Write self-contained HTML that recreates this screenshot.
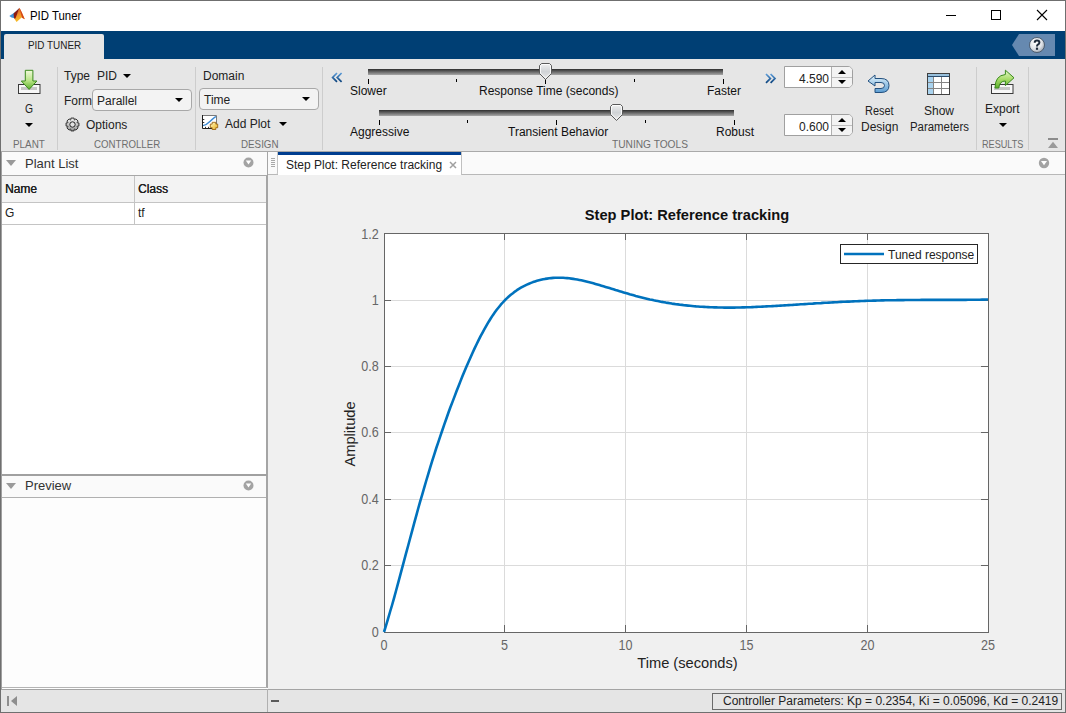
<!DOCTYPE html>
<html><head><meta charset="utf-8">
<style>
*{box-sizing:border-box;}
html,body{margin:0;padding:0;}
body{width:1066px;height:713px;overflow:hidden;position:relative;background:#fff;font-family:"Liberation Sans",sans-serif;color:#000;}
.a{position:absolute;}
.t{position:absolute;white-space:nowrap;line-height:1;}
.sep{position:absolute;width:1px;background:#cdcdcd;top:67px;height:83px;}
.lab{position:absolute;white-space:nowrap;line-height:1;font-size:11px;color:#6e6e6e;}
.tri{position:absolute;width:0;height:0;border-left:4px solid transparent;border-right:4px solid transparent;border-top:4px solid #000;}
</style></head>
<body>
<!-- title bar -->
<div class="a" style="left:0;top:0;width:1066px;height:31px;background:#fff;"></div>
<svg class="a" style="left:0;top:0" width="30" height="26" viewBox="0 0 30 26">
  <defs><linearGradient id="lg" x1="0" y1="0" x2="0.3" y2="1"><stop offset="0" stop-color="#c8461c"/><stop offset="0.5" stop-color="#f08a2a"/><stop offset="1" stop-color="#f8c52a"/></linearGradient></defs>
  <path d="M9.3,15.9 L13.5,13.2 L16.5,11 L19.2,8.2 L16.5,14 L14.5,18.2 L11.5,17.6 Z" fill="#3d8fd6"/>
  <path d="M19.4,7.8 L21.6,12 L24.8,19.2 L21.6,17.6 L16.6,22 L14.2,18.4 L16.8,14.2 Z" fill="url(#lg)"/>
  <path d="M19.4,7.8 L21.6,12 L24.8,19.2 L22,17.8 Z" fill="#d4451a"/>
  <path d="M13.6,13.4 L19.2,8.2 L17.4,13.6 L15.4,18.6 L14.2,18.4 L13.8,16 Z" fill="#8e1a10"/>
</svg>
<div class="t" style="left:30px;top:10px;font-size:12px;color:#000;transform:scaleX(.95);transform-origin:0 0;">PID Tuner</div>
<div class="a" style="left:946px;top:15px;width:10px;height:1px;background:#000;"></div>
<div class="a" style="left:991px;top:10px;width:10px;height:10px;border:1px solid #000;"></div>
<svg class="a" style="left:1036px;top:9px" width="12" height="12" viewBox="0 0 12 12"><path d="M1,1 L11,11 M11,1 L1,11" stroke="#000" stroke-width="1.1"/></svg>

<!-- blue bar -->
<div class="a" style="left:0;top:31px;width:1066px;height:28px;background:#003f74;"></div>
<div class="a" style="left:4px;top:34px;width:100px;height:25px;background:#e6e6e6;border-radius:2px 2px 0 0;"></div>
<div class="t" style="left:27.5px;top:40px;font-size:11.5px;color:#222;transform:scaleX(.86);transform-origin:0 0;">PID TUNER</div>
<svg class="a" style="left:1011px;top:34px" width="45" height="22" viewBox="0 0 45 22">
  <path d="M1,11 L8,0 L44,0 L44,22 L8,22 Z" fill="#6689b0"/>
  <defs><radialGradient id="hq" cx="0.4" cy="0.35" r="0.7"><stop offset="0" stop-color="#ffffff"/><stop offset="0.6" stop-color="#dfe3e8"/><stop offset="1" stop-color="#9aa3ad"/></radialGradient></defs>
  <circle cx="26" cy="11" r="7.5" fill="url(#hq)" stroke="#3c4a5a" stroke-width="0.8"/>
  <path d="M23.7,8.7 Q23.7,6.4 26,6.4 Q28.4,6.4 28.4,8.5 Q28.4,9.9 26.9,10.7 Q26,11.2 26,12.6" stroke="#1f2b3b" stroke-width="2" fill="none"/><rect x="24.9" y="13.6" width="2.2" height="2.2" fill="#1f2b3b"/>
</svg>

<!-- ribbon -->
<div class="a" style="left:0;top:59px;width:1066px;height:93px;background:#e6e6e6;border-bottom:1px solid #a9a9a9;"></div>
<div class="sep" style="left:57px"></div>
<div class="sep" style="left:195px"></div>
<div class="sep" style="left:322px"></div>
<div class="sep" style="left:976px"></div>
<div class="sep" style="left:1028px"></div>

<!-- PLANT -->
<svg class="a" style="left:12px;top:65px" width="35" height="35" viewBox="0 0 35 35">
  <defs><linearGradient id="ga" x1="0" y1="0" x2="0" y2="1"><stop offset="0" stop-color="#f2f9dc"/><stop offset="0.55" stop-color="#b8e484"/><stop offset="1" stop-color="#5aae2c"/></linearGradient></defs>
  <rect x="6.5" y="19.5" width="21.5" height="9" fill="#f7f7f7" stroke="#3a3a3a" stroke-width="1"/>
  <rect x="9" y="22" width="16" height="3" fill="#c6c6c6"/>
  <path d="M13.3,5.3 L20.9,5.3 L20.9,16 L24.9,16 L17.1,24.4 L9.3,16 L13.3,16 Z" fill="url(#ga)" stroke="#3a8a1c" stroke-width="1"/>
</svg>
<div class="t" style="left:25px;top:103px;font-size:12px;color:#222;transform:scaleX(.86);transform-origin:0 0;">G</div>
<div class="tri" style="left:25px;top:123px;"></div>
<div class="lab" style="left:13px;top:139px;transform:scaleX(.9);transform-origin:0 0;">PLANT</div>

<!-- CONTROLLER -->
<div class="t" style="left:64px;top:70px;font-size:12px;color:#222;">Type</div>
<div class="t" style="left:97px;top:70px;font-size:12px;color:#222;">PID</div>
<div class="tri" style="left:123px;top:74px;"></div>
<div class="t" style="left:64px;top:95px;font-size:12px;color:#222;">Form</div>
<div class="a" style="left:92px;top:89px;width:100px;height:22px;background:#f3f3f3;border:1px solid #a8a8a8;border-radius:4px;"></div>
<div class="t" style="left:97px;top:95px;font-size:12px;color:#222;">Parallel</div>
<div class="tri" style="left:175px;top:98px;"></div>
<svg class="a" style="left:64.5px;top:116.5px" width="15" height="15" viewBox="0 0 15 15">
  <defs><linearGradient id="gg" x1="0" y1="0" x2="0" y2="1"><stop offset="0" stop-color="#f4f4f4"/><stop offset="1" stop-color="#9a9a9a"/></linearGradient></defs>
  <path d="M12.18,5.74 L13.91,5.93 L13.91,9.07 L12.18,9.26 L12.05,9.56 L13.14,10.92 L10.92,13.14 L9.56,12.05 L9.26,12.18 L9.07,13.91 L5.93,13.91 L5.74,12.18 L5.44,12.05 L4.08,13.14 L1.86,10.92 L2.95,9.56 L2.82,9.26 L1.09,9.07 L1.09,5.93 L2.82,5.74 L2.95,5.44 L1.86,4.08 L4.08,1.86 L5.44,2.95 L5.74,2.82 L5.93,1.09 L9.07,1.09 L9.26,2.82 L9.56,2.95 L10.92,1.86 L13.14,4.08 L12.05,5.44 Z" fill="url(#gg)" stroke="#2e2e2e" stroke-width="1"/>
  <circle cx="7.5" cy="7.5" r="2.7" fill="#e2e2e2" stroke="#262626" stroke-width="1"/>
</svg>
<div class="t" style="left:86px;top:119px;font-size:12px;color:#222;">Options</div>
<div class="lab" style="left:94px;top:139px;transform:scaleX(.88);transform-origin:0 0;">CONTROLLER</div>

<!-- DESIGN -->
<div class="t" style="left:203px;top:70px;font-size:12px;color:#222;">Domain</div>
<div class="a" style="left:199px;top:88px;width:120px;height:22px;background:#f3f3f3;border:1px solid #a8a8a8;border-radius:4px;"></div>
<div class="t" style="left:204px;top:94px;font-size:12px;color:#222;">Time</div>
<div class="tri" style="left:302px;top:97px;"></div>
<svg class="a" style="left:198px;top:110px" width="24" height="24" viewBox="0 0 24 24">
  <defs><linearGradient id="pl" x1="0" y1="0" x2="1" y2="1"><stop offset="0" stop-color="#fffbe0"/><stop offset="0.5" stop-color="#f6d66a"/><stop offset="1" stop-color="#e2a82a"/></linearGradient></defs>
  <rect x="5" y="5.5" width="13.5" height="13" fill="#fff"/>
  <path d="M4.5,5.5 H18.5 V15" stroke="#7a7a7a" stroke-width="1" fill="none"/>
  <path d="M4.5,5 V18.5 H14" stroke="#1e1e1e" stroke-width="1" fill="none"/>
  <path d="M5,9.5 H6.3 M5,12.5 H6.3 M7.5,18 V16.8 M10.5,18 V16.8" stroke="#333" stroke-width="1"/>
  <path d="M5,15.6 C8.5,15 10.5,13 12.5,11 C14.5,9 16.5,7.2 18,6.6" stroke="#3a88d2" stroke-width="1.4" fill="none"/>
  <path d="M14.2,12.3 H17.8 V14.1 H19.7 V17.7 H17.8 V19.5 H14.2 V17.7 H12.3 V14.1 H14.2 Z" fill="url(#pl)" stroke="#9c6410" stroke-width="0.9"/>
</svg>
<div class="t" style="left:225px;top:118px;font-size:12px;color:#222;">Add Plot</div>
<div class="tri" style="left:279px;top:122px;"></div>
<div class="lab" style="left:240.5px;top:139px;transform:scaleX(.89);transform-origin:0 0;">DESIGN</div>

<!-- TUNING TOOLS -->
<svg class="a" style="left:331px;top:72px" width="13" height="11" viewBox="0 0 13 11"><defs><linearGradient id="cv" x1="0" y1="0" x2="0" y2="1"><stop offset="0" stop-color="#5b9bd8"/><stop offset="1" stop-color="#0d447e"/></linearGradient></defs><path d="M6,1 L1.6,5.4 L6,9.8 M10.6,1 L6.2,5.4 L10.6,9.8" stroke="url(#cv)" stroke-width="1.7" fill="none"/></svg>
<svg class="a" style="left:764px;top:73px" width="13" height="11" viewBox="0 0 13 11"><path d="M2,1 L6.4,5.4 L2,9.8 M6.6,1 L11,5.4 L6.6,9.8" stroke="url(#cv)" stroke-width="1.7" fill="none"/></svg>
<!-- slider 1 -->
<div class="a" style="left:368px;top:69px;width:355px;height:6px;background:linear-gradient(#2e2e2e,#a8a8a8);"></div>
<div class="a" style="left:368px;top:79px;width:1px;height:5px;background:#000;"></div>
<div class="a" style="left:456px;top:79px;width:1px;height:3px;background:#000;"></div>
<div class="a" style="left:545px;top:79px;width:1px;height:5px;background:#000;"></div>
<div class="a" style="left:634px;top:79px;width:1px;height:3px;background:#000;"></div>
<div class="a" style="left:723px;top:79px;width:1px;height:5px;background:#000;"></div>
<svg class="a" style="left:539px;top:63px" width="13" height="18" viewBox="0 0 13 18">
  <defs><linearGradient id="th" x1="0" y1="0" x2="0" y2="1"><stop offset="0" stop-color="#f2f2f2"/><stop offset="0.5" stop-color="#d0d3d6"/><stop offset="1" stop-color="#e8e8e8"/></linearGradient></defs>
  <path d="M0.5,2.5 L2.5,0.5 L10.5,0.5 L12.5,2.5 L12.5,10.5 L6.5,16.5 L0.5,10.5 Z" fill="url(#th)" stroke="#5a5a5a" stroke-width="1"/><path d="M1.5,2.9 L2.9,1.5 L10.1,1.5 L11.5,2.9 L11.5,10.1 L6.5,15.1 L1.5,10.1 Z" fill="none" stroke="#fff" stroke-width="0.9" opacity="0.9"/>
</svg>
<div class="t" style="left:350px;top:85px;font-size:12px;color:#111;">Slower</div>
<div class="t" style="left:479px;top:85px;font-size:12px;color:#111;">Response Time (seconds)</div>
<div class="t" style="left:707px;top:85px;font-size:12px;color:#111;">Faster</div>
<!-- slider 2 -->
<div class="a" style="left:379px;top:110px;width:355px;height:6px;background:linear-gradient(#2e2e2e,#a8a8a8);"></div>
<div class="a" style="left:379px;top:120px;width:1px;height:5px;background:#000;"></div>
<div class="a" style="left:467px;top:120px;width:1px;height:3px;background:#000;"></div>
<div class="a" style="left:556px;top:120px;width:1px;height:5px;background:#000;"></div>
<div class="a" style="left:645px;top:120px;width:1px;height:3px;background:#000;"></div>
<div class="a" style="left:734px;top:120px;width:1px;height:5px;background:#000;"></div>
<svg class="a" style="left:610px;top:104px" width="13" height="18" viewBox="0 0 13 18">
  <path d="M0.5,2.5 L2.5,0.5 L10.5,0.5 L12.5,2.5 L12.5,10.5 L6.5,16.5 L0.5,10.5 Z" fill="url(#th)" stroke="#5a5a5a" stroke-width="1"/><path d="M1.5,2.9 L2.9,1.5 L10.1,1.5 L11.5,2.9 L11.5,10.1 L6.5,15.1 L1.5,10.1 Z" fill="none" stroke="#fff" stroke-width="0.9" opacity="0.9"/>
</svg>
<div class="t" style="left:350px;top:126px;font-size:12px;color:#111;">Aggressive</div>
<div class="t" style="left:508px;top:126px;font-size:12px;color:#111;">Transient Behavior</div>
<div class="t" style="left:716px;top:126px;font-size:12px;color:#111;">Robust</div>
<!-- spinners -->
<div class="a" style="left:784px;top:66px;width:69px;height:22px;background:#fff;border:1px solid #a0a0a0;border-radius:0 5px 5px 0;"></div>
<div class="a" style="left:831px;top:67px;width:21px;height:20px;background:#f3f3f3;border-left:1px solid #b0b0b0;border-radius:0 4px 4px 0;"></div>
<div class="a" style="left:832px;top:77px;width:20px;height:1px;background:#c0c0c0;"></div>
<div class="a" style="left:838px;top:70px;width:0;height:0;border-left:4px solid transparent;border-right:4px solid transparent;border-bottom:4px solid #000;"></div>
<div class="a" style="left:838px;top:80px;width:0;height:0;border-left:4px solid transparent;border-right:4px solid transparent;border-top:4px solid #000;"></div>
<div class="t" style="left:790px;top:73px;width:39px;text-align:right;font-size:12px;color:#222;">4.590</div>
<div class="a" style="left:784px;top:114px;width:69px;height:22px;background:#fff;border:1px solid #a0a0a0;border-radius:0 5px 5px 0;"></div>
<div class="a" style="left:831px;top:115px;width:21px;height:20px;background:#f3f3f3;border-left:1px solid #b0b0b0;border-radius:0 4px 4px 0;"></div>
<div class="a" style="left:832px;top:125px;width:20px;height:1px;background:#c0c0c0;"></div>
<div class="a" style="left:838px;top:118px;width:0;height:0;border-left:4px solid transparent;border-right:4px solid transparent;border-bottom:4px solid #000;"></div>
<div class="a" style="left:838px;top:128px;width:0;height:0;border-left:4px solid transparent;border-right:4px solid transparent;border-top:4px solid #000;"></div>
<div class="t" style="left:790px;top:121px;width:39px;text-align:right;font-size:12px;color:#222;">0.600</div>
<div class="lab" style="left:612px;top:139px;transform:scaleX(.925);transform-origin:0 0;">TUNING TOOLS</div>

<!-- Reset / Show -->
<svg class="a" style="left:867px;top:74px" width="24" height="20" viewBox="0 0 24 20">
  <defs><linearGradient id="rb" x1="0" y1="0" x2="0" y2="1"><stop offset="0" stop-color="#e6f6fd"/><stop offset="1" stop-color="#5a9cd2"/></linearGradient></defs>
  <path d="M1,7 L8,1 L8,4.5 L14,4.5 Q22,4.5 22,11.5 Q22,18.5 14,18.5 L8,18.5 L8,14.5 L14,14.5 Q17.5,14.5 17.5,11.5 Q17.5,8.5 14,8.5 L8,8.5 L8,12 Z" fill="url(#rb)" stroke="#22507f" stroke-width="1"/>
</svg>
<div class="t" style="left:865px;top:105px;font-size:12px;color:#222;transform:scaleX(.91);transform-origin:0 0;">Reset</div>
<div class="t" style="left:861px;top:121px;font-size:12px;color:#222;">Design</div>
<svg class="a" style="left:927px;top:73px" width="23" height="22" viewBox="0 0 23 22">
  <rect x="0.5" y="0.5" width="22" height="21" fill="#fff" stroke="#404040" stroke-width="1"/>
  <rect x="1" y="1" width="21" height="3" fill="#98c0dc"/>
  <path d="M1,3.5 H22" stroke="#2d4d6d" stroke-width="1"/>
  <rect x="1" y="4" width="5" height="17" fill="#a9d3ef"/>
  <path d="M1,9.5 H22 M1,15.5 H22 M6.5,4 V21 M14.5,4 V21" stroke="#858585" stroke-width="1"/>
</svg>
<div class="t" style="left:924px;top:105px;font-size:12px;color:#222;">Show</div>
<div class="t" style="left:910px;top:121px;font-size:12px;color:#222;transform:scaleX(.95);transform-origin:0 0;">Parameters</div>

<!-- RESULTS -->
<svg class="a" style="left:985px;top:65px" width="35" height="35" viewBox="0 0 35 35">
  <defs><linearGradient id="eg" x1="0" y1="0" x2="0" y2="1"><stop offset="0" stop-color="#e6f8c8"/><stop offset="0.5" stop-color="#a8dc6a"/><stop offset="1" stop-color="#5cae2a"/></linearGradient></defs>
  <rect x="6.5" y="19.5" width="21.5" height="9" fill="#f7f7f7" stroke="#3a3a3a" stroke-width="1"/>
  <rect x="9" y="22" width="16" height="3" fill="#c6c6c6"/>
  <path d="M10,23 Q10,10.5 20.4,9.5 L20.4,5.2 L29,12.8 L20.4,20.6 L20.4,16 Q14.5,16 13.8,23 Z" fill="url(#eg)" stroke="#3a8a1c" stroke-width="1"/>
</svg>
<div class="t" style="left:985px;top:103px;font-size:12px;color:#222;">Export</div>
<div class="tri" style="left:999px;top:123px;"></div>
<div class="lab" style="left:981.8px;top:139px;transform:scaleX(.83);transform-origin:0 0;">RESULTS</div>
<svg class="a" style="left:1048px;top:138px" width="10" height="10" viewBox="0 0 10 10"><rect x="0" y="0" width="10" height="2" fill="#8c8c8c"/><path d="M0,10 L5,3.8 L10,10 Z" fill="#9a9a9a"/></svg>

<!-- LEFT PANEL -->
<div class="a" style="left:1px;top:152px;width:267px;height:536px;background:#fff;border-right:1px solid #a5a5a5;"></div>
<div class="a" style="left:266px;top:175px;width:1px;height:513px;background:#a5a5a5;"></div>
<div class="a" style="left:1px;top:152px;width:266px;height:24px;background:#fafafa;border-bottom:1px solid #a8a8a8;"></div>
<div class="a" style="left:6px;top:160px;width:0;height:0;border-left:5px solid transparent;border-right:5px solid transparent;border-top:6px solid #9a9a9a;"></div>
<div class="t" style="left:25px;top:157px;font-size:13px;color:#333;">Plant List</div>
<svg class="a" style="left:243px;top:157px" width="11" height="11" viewBox="0 0 11 11"><circle cx="5.5" cy="5.5" r="5" fill="#a3a3a3"/><path d="M2.8,3.6 L8.2,3.6 L5.5,7.6 Z" fill="#fff"/></svg>
<!-- table -->
<div class="a" style="left:1px;top:176px;width:265px;height:27px;background:#f3f3f3;border-bottom:1px solid #c4c4c4;"></div>
<div class="a" style="left:1px;top:203px;width:265px;height:22px;background:#fff;border-bottom:1px solid #c4c4c4;"></div>
<div class="a" style="left:134px;top:176px;width:1px;height:48px;background:#c4c4c4;"></div>
<div class="t" style="left:5px;top:183px;font-size:12px;color:#222;text-shadow:0.15px 0 0 #111;">Name</div>
<div class="t" style="left:138px;top:183px;font-size:12px;color:#222;text-shadow:0.15px 0 0 #111;">Class</div>
<div class="t" style="left:5px;top:207px;font-size:12px;color:#222;">G</div>
<div class="t" style="left:138px;top:207px;font-size:12px;color:#222;">tf</div>
<!-- preview -->
<div class="a" style="left:1px;top:474px;width:266px;height:2px;background:#a0a0a0;"></div>
<div class="a" style="left:1px;top:476px;width:265px;height:22px;background:#fafafa;border-bottom:1px solid #b0b0b0;"></div>
<div class="a" style="left:6px;top:483px;width:0;height:0;border-left:5px solid transparent;border-right:5px solid transparent;border-top:6px solid #9a9a9a;"></div>
<div class="t" style="left:25px;top:479px;font-size:13px;color:#333;">Preview</div>
<svg class="a" style="left:243px;top:480px" width="11" height="11" viewBox="0 0 11 11"><circle cx="5.5" cy="5.5" r="5" fill="#a3a3a3"/><path d="M2.8,3.6 L8.2,3.6 L5.5,7.6 Z" fill="#fff"/></svg>
<div class="a" style="left:1px;top:498px;width:265px;height:189px;background:#fdfdfd;"></div>
<div class="a" style="left:1px;top:687px;width:266px;height:1px;background:#b4b4b4;"></div>
<div class="a" style="left:1px;top:689px;width:1064px;height:1px;background:#a4a4a4;"></div>
<div class="a" style="left:1px;top:690px;width:1064px;height:22px;background:#e5e5e5;"></div>
<div class="a" style="left:267px;top:689px;width:1px;height:23px;background:#b0b0b0;"></div>
<svg class="a" style="left:6px;top:695px" width="12" height="12" viewBox="0 0 12 12"><rect x="1" y="1" width="2" height="10" fill="#8e8e8e"/><path d="M5,6 L11,1 L11,11 Z" fill="#8e8e8e"/></svg>
<div class="a" style="left:271px;top:700px;width:8px;height:2px;background:#5a5a5a;"></div>

<div class="a" style="left:1px;top:152px;width:1px;height:537px;background:#a0a0a0;"></div>
<!-- DOC AREA -->
<div class="a" style="left:268px;top:152px;width:797px;height:537px;background:#f0f0f0;"></div>
<div class="a" style="left:268px;top:152px;width:797px;height:23px;background:#fafafa;border-bottom:1px solid #b8b8b8;"></div>
<div class="a" style="left:268px;top:152px;width:10px;height:23px;background:#fafafa;border-right:1px solid #c4c4c4;border-bottom:1px solid #b8b8b8;border-bottom-right-radius:2px;"></div>
<svg class="a" style="left:271px;top:158px" width="5" height="10" viewBox="0 0 5 10"><path d="M0,0.5 H4 M0,2.5 H4 M0,4.5 H4 M0,6.5 H4 M0,8.5 H4" stroke="#a8a8a8" stroke-width="1"/></svg>
<div class="a" style="left:278px;top:152px;width:184px;height:23px;background:#fff;border-right:1px solid #c0c0c0;"></div>
<div class="a" style="left:278px;top:152px;width:183px;height:3px;background:#003e90;"></div>
<div class="t" style="left:286px;top:159px;font-size:12px;color:#222;">Step Plot: Reference tracking</div>
<svg class="a" style="left:449px;top:161px" width="8" height="8" viewBox="0 0 8 8"><path d="M1,1 L7,7 M7,1 L1,7" stroke="#a0a0a0" stroke-width="1.5"/></svg>
<svg class="a" style="left:1038px;top:157px" width="12" height="12" viewBox="0 0 12 12"><circle cx="6" cy="6" r="5.2" fill="#a3a3a3"/><path d="M3,4 L9,4 L6,8.3 Z" fill="#fff"/></svg>

<!-- PLOT -->
<svg class="a" style="left:0;top:0" width="1066" height="713" viewBox="0 0 1066 713">
  <rect x="384" y="233" width="604" height="399" fill="#fff"/>
  <g stroke="#dbdbdb" stroke-width="1">
    <path d="M504.5,233 V632 M625.5,233 V632 M746.5,233 V632 M867.5,233 V632"/>
    <path d="M384,300.5 H988 M384,366.5 H988 M384,432.5 H988 M384,499.5 H988 M384,565.5 H988"/>
  </g>
  <g stroke="#666" stroke-width="1" fill="none">
    <rect x="384.5" y="233.5" width="604" height="399"/>
    <path d="M384,300.5 h7 M384,366.5 h7 M384,432.5 h7 M384,499.5 h7 M384,565.5 h7"/>
    <path d="M988,300.5 h-7 M988,366.5 h-7 M988,432.5 h-7 M988,499.5 h-7 M988,565.5 h-7"/>
    <path d="M504.5,632 v-7 M625.5,632 v-7 M746.5,632 v-7 M867.5,632 v-7"/>
    <path d="M504.5,233 v7 M625.5,233 v7 M746.5,233 v7 M867.5,233 v7"/>
  </g>
  <path d="M384.0,632.0 L386.0,625.6 L388.0,618.9 L390.0,612.0 L392.1,605.0 L394.1,597.8 L396.1,590.5 L398.1,583.1 L400.1,575.6 L402.1,568.1 L404.1,560.6 L406.1,553.1 L408.2,545.5 L410.2,538.0 L412.2,530.6 L414.2,523.1 L416.2,515.8 L418.2,508.5 L420.2,501.4 L422.3,494.3 L424.3,487.3 L426.3,480.5 L428.3,473.8 L430.3,467.1 L432.3,460.6 L434.3,454.3 L436.3,448.0 L438.4,441.9 L440.4,435.9 L442.4,430.0 L444.4,424.2 L446.4,418.5 L448.4,412.8 L450.4,407.3 L452.5,401.9 L454.5,396.6 L456.5,391.3 L458.5,386.2 L460.5,381.1 L462.5,376.1 L464.5,371.2 L466.5,366.5 L468.6,361.8 L470.6,357.2 L472.6,352.7 L474.6,348.4 L476.6,344.2 L478.6,340.1 L480.6,336.1 L482.7,332.3 L484.7,328.6 L486.7,325.1 L488.7,321.7 L490.7,318.5 L492.7,315.4 L494.7,312.5 L496.7,309.8 L498.8,307.2 L500.8,304.7 L502.8,302.5 L504.8,300.3 L506.8,298.4 L508.8,296.5 L510.8,294.8 L512.9,293.2 L514.9,291.6 L516.9,290.2 L518.9,288.9 L520.9,287.7 L522.9,286.6 L524.9,285.6 L526.9,284.6 L529.0,283.7 L531.0,282.9 L533.0,282.1 L535.0,281.4 L537.0,280.8 L539.0,280.3 L541.0,279.8 L543.1,279.3 L545.1,278.9 L547.1,278.6 L549.1,278.3 L551.1,278.1 L553.1,277.9 L555.1,277.8 L557.1,277.8 L559.2,277.7 L561.2,277.8 L563.2,277.8 L565.2,278.0 L567.2,278.1 L569.2,278.3 L571.2,278.6 L573.3,278.9 L575.3,279.2 L577.3,279.5 L579.3,279.9 L581.3,280.3 L583.3,280.8 L585.3,281.3 L587.3,281.8 L589.4,282.3 L591.4,282.8 L593.4,283.3 L595.4,283.9 L597.4,284.5 L599.4,285.1 L601.4,285.7 L603.5,286.3 L605.5,286.9 L607.5,287.5 L609.5,288.1 L611.5,288.7 L613.5,289.3 L615.5,290.0 L617.5,290.6 L619.6,291.2 L621.6,291.8 L623.6,292.4 L625.6,293.0 L627.6,293.6 L629.6,294.2 L631.6,294.7 L633.7,295.3 L635.7,295.9 L637.7,296.4 L639.7,296.9 L641.7,297.4 L643.7,297.9 L645.7,298.4 L647.7,298.9 L649.8,299.4 L651.8,299.8 L653.8,300.3 L655.8,300.7 L657.8,301.1 L659.8,301.5 L661.8,301.9 L663.9,302.2 L665.9,302.6 L667.9,302.9 L669.9,303.2 L671.9,303.6 L673.9,303.9 L675.9,304.2 L677.9,304.4 L680.0,304.7 L682.0,304.9 L684.0,305.2 L686.0,305.4 L688.0,305.6 L690.0,305.8 L692.0,306.0 L694.1,306.2 L696.1,306.4 L698.1,306.5 L700.1,306.7 L702.1,306.8 L704.1,306.9 L706.1,307.0 L708.1,307.1 L710.2,307.2 L712.2,307.3 L714.2,307.4 L716.2,307.4 L718.2,307.5 L720.2,307.5 L722.2,307.5 L724.3,307.6 L726.3,307.6 L728.3,307.6 L730.3,307.6 L732.3,307.6 L734.3,307.6 L736.3,307.5 L738.3,307.5 L740.4,307.5 L742.4,307.4 L744.4,307.4 L746.4,307.3 L748.4,307.2 L750.4,307.2 L752.4,307.1 L754.5,307.0 L756.5,306.9 L758.5,306.8 L760.5,306.7 L762.5,306.6 L764.5,306.5 L766.5,306.4 L768.5,306.3 L770.6,306.2 L772.6,306.1 L774.6,306.0 L776.6,305.9 L778.6,305.8 L780.6,305.6 L782.6,305.5 L784.7,305.4 L786.7,305.3 L788.7,305.1 L790.7,305.0 L792.7,304.9 L794.7,304.7 L796.7,304.6 L798.7,304.5 L800.8,304.3 L802.8,304.2 L804.8,304.1 L806.8,304.0 L808.8,303.8 L810.8,303.7 L812.8,303.6 L814.9,303.4 L816.9,303.3 L818.9,303.2 L820.9,303.1 L822.9,302.9 L824.9,302.8 L826.9,302.7 L828.9,302.6 L831.0,302.5 L833.0,302.4 L835.0,302.3 L837.0,302.2 L839.0,302.0 L841.0,301.9 L843.0,301.8 L845.1,301.7 L847.1,301.6 L849.1,301.6 L851.1,301.5 L853.1,301.4 L855.1,301.3 L857.1,301.2 L859.1,301.1 L861.2,301.0 L863.2,301.0 L865.2,300.9 L867.2,300.8 L869.2,300.8 L871.2,300.7 L873.2,300.6 L875.3,300.6 L877.3,300.5 L879.3,300.5 L881.3,300.4 L883.3,300.4 L885.3,300.3 L887.3,300.3 L889.3,300.3 L891.4,300.2 L893.4,300.2 L895.4,300.2 L897.4,300.1 L899.4,300.1 L901.4,300.1 L903.4,300.1 L905.5,300.0 L907.5,300.0 L909.5,300.0 L911.5,300.0 L913.5,300.0 L915.5,300.0 L917.5,300.0 L919.5,300.0 L921.6,299.9 L923.6,299.9 L925.6,299.9 L927.6,299.9 L929.6,299.9 L931.6,299.9 L933.6,299.9 L935.7,299.9 L937.7,299.9 L939.7,299.9 L941.7,299.9 L943.7,299.9 L945.7,299.9 L947.7,299.9 L949.7,299.9 L951.8,299.9 L953.8,299.9 L955.8,299.9 L957.8,299.9 L959.8,299.9 L961.8,299.9 L963.8,299.9 L965.9,299.9 L967.9,299.8 L969.9,299.8 L971.9,299.8 L973.9,299.8 L975.9,299.7 L977.9,299.7 L979.9,299.7 L982.0,299.6 L984.0,299.6 L986.0,299.5 L988.0,299.5" stroke="#0072bd" stroke-width="2.6" fill="none" stroke-linejoin="round"/>
  <g font-family="Liberation Sans" font-size="14" fill="#666">
    <text transform="translate(378.8,238.8) scale(0.9,1)" text-anchor="end">1.2</text>
    <text transform="translate(378.8,304.8) scale(0.9,1)" text-anchor="end">1</text>
    <text transform="translate(378.8,370.8) scale(0.9,1)" text-anchor="end">0.8</text>
    <text transform="translate(378.8,436.8) scale(0.9,1)" text-anchor="end">0.6</text>
    <text transform="translate(378.8,503.8) scale(0.9,1)" text-anchor="end">0.4</text>
    <text transform="translate(378.8,569.8) scale(0.9,1)" text-anchor="end">0.2</text>
    <text transform="translate(378.8,636.8) scale(0.9,1)" text-anchor="end">0</text>
    <text transform="translate(384,649.6) scale(0.9,1)" text-anchor="middle">0</text>
    <text transform="translate(504.5,649.6) scale(0.9,1)" text-anchor="middle">5</text>
    <text transform="translate(625.5,649.6) scale(0.9,1)" text-anchor="middle">10</text>
    <text transform="translate(746.5,649.6) scale(0.9,1)" text-anchor="middle">15</text>
    <text transform="translate(867.5,649.6) scale(0.9,1)" text-anchor="middle">20</text>
    <text transform="translate(988,649.6) scale(0.9,1)" text-anchor="middle">25</text>
    </g>
  <text x="687" y="220" font-family="Liberation Sans" font-size="14.67" font-weight="bold" fill="#111" text-anchor="middle">Step Plot: Reference tracking</text>
  <text x="687.5" y="668" font-family="Liberation Sans" font-size="14.67" fill="#222" text-anchor="middle">Time (seconds)</text>
  <text transform="translate(355,434) rotate(-90)" font-family="Liberation Sans" font-size="14.67" fill="#222" text-anchor="middle">Amplitude</text>
  <rect x="840.5" y="244.5" width="137" height="19" fill="#fff" stroke="#262626" stroke-width="1"/>
  <path d="M844,254 H884" stroke="#0072bd" stroke-width="2.6"/>
  <text x="888" y="259" font-family="Liberation Sans" font-size="12" fill="#222">Tuned response</text>
</svg>
<!-- status -->
<div class="a" style="left:712px;top:693px;width:350px;height:17px;border:1px solid #6a6a6a;background:#e5e5e5;"></div>
<div class="t" style="left:723px;top:695px;font-size:12px;color:#222;">Controller Parameters: Kp = 0.2354, Ki = 0.05096, Kd = 0.2419</div>

<!-- window border -->
<div class="a" style="left:0;top:0;width:1066px;height:713px;border:1px solid #6f6f6f;pointer-events:none;"></div>
</body></html>
